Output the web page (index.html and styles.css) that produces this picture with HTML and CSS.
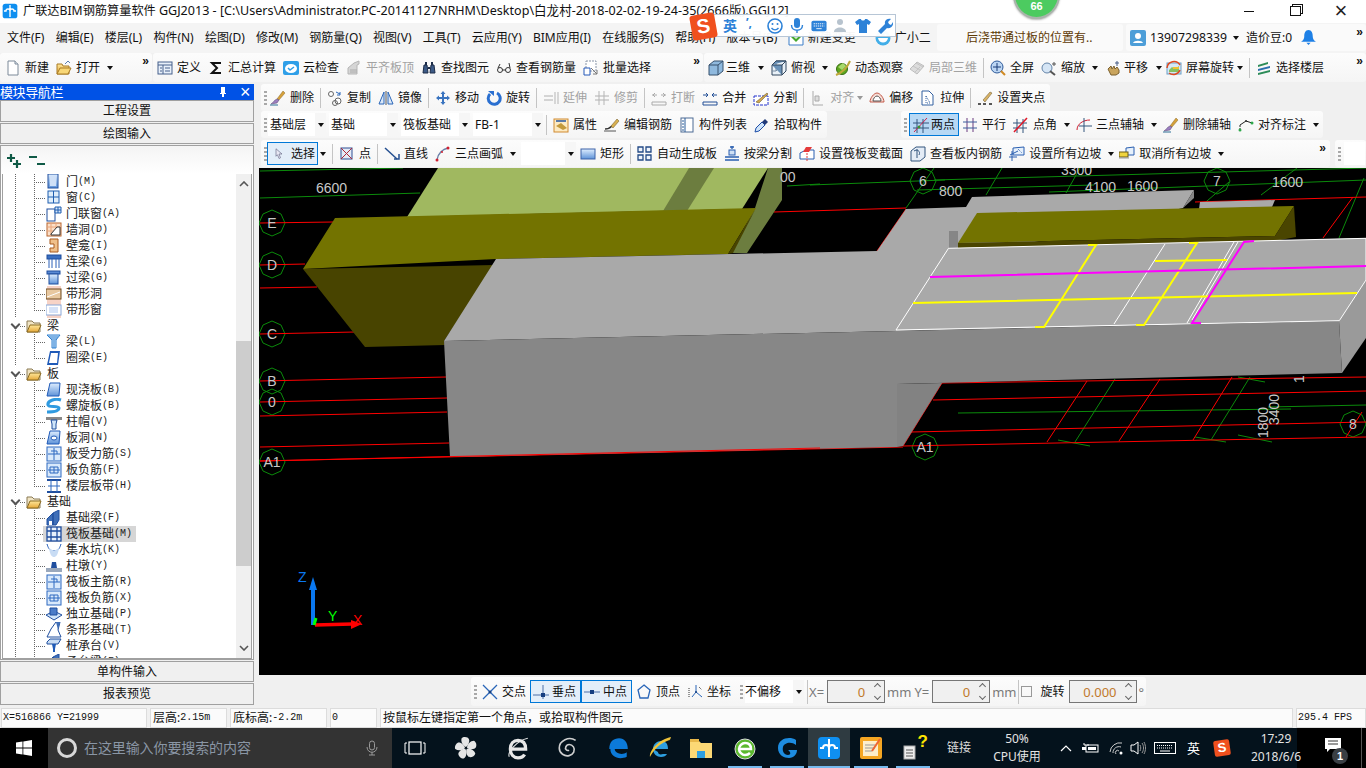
FILE: index.html
```html
<!DOCTYPE html>
<html lang="zh-CN">
<head>
<meta charset="utf-8">
<title>广联达BIM钢筋算量软件 GGJ2013</title>
<link rel="stylesheet" href="styles.css">
</head>
<body>
<svg class="sprite" aria-hidden="true"><defs>
<linearGradient id="gb" x1="0" y1="0" x2="0" y2="1"><stop offset="0" stop-color="#dfeeff"/><stop offset="1" stop-color="#5d92d8"/></linearGradient>
<linearGradient id="gy" x1="0" y1="0" x2="0" y2="1"><stop offset="0" stop-color="#ffe79a"/><stop offset="1" stop-color="#e6a93a"/></linearGradient>
<symbol id="new" viewBox="0 0 16 16"><path d="M3 1h7l3 3v11H3z" fill="#fff" stroke="#7d8a99"/><path d="M10 1v3h3" fill="#dfe6ee" stroke="#7d8a99"/></symbol>
<symbol id="open" viewBox="0 0 16 16"><path d="M1 14V4h5l1 2h6v8z" fill="url(#gy)" stroke="#a87a25"/><path d="M1 14l3-6h11l-3 6z" fill="#f8d777" stroke="#a87a25"/><path d="M9 4l3-3 2 2" fill="none" stroke="#5a7fb0"/></symbol>
<symbol id="chg" viewBox="0 0 16 16"><path d="M1 4v11h14V4" fill="#fff" stroke="#3d7fc8"/><path d="M8 3l5 4-5 5-5-5z" fill="#46a82e"/><path d="M8 5v4M6 7h4" stroke="#fff"/></symbol>
<symbol id="xiao" viewBox="0 0 16 16"><circle cx="8" cy="8" r="7.500" fill="#42aee8"/><path d="M3 8c1 6 9 6 10 0" fill="#fff"/><circle cx="5.500" cy="5" r="1" fill="#fff"/><circle cx="10.500" cy="5" r="1" fill="#fff"/></symbol>
<symbol id="def" viewBox="0 0 16 16"><rect x="1" y="2" width="14" height="12" fill="#e8f0fa" stroke="#46608c"/><path d="M1 5h14M6 5v9M3 8h2M3 11h2M8 8h5M8 11h5" stroke="#46608c"/></symbol>
<symbol id="sigma" viewBox="0 0 16 16"><path d="M13 3H4l5 5-5 5h9" fill="none" stroke="#111" stroke-width="2"/></symbol>
<symbol id="cloud" viewBox="0 0 16 16"><rect x="0" y="1" width="16" height="14" rx="2" fill="#2f9fe8"/><ellipse cx="8" cy="8.500" rx="6" ry="4.500" fill="#fff"/><path d="M5 8l2 2 4-3" fill="none" stroke="#2f9fe8" stroke-width="1.500"/></symbol>
<symbol id="flat" viewBox="0 0 16 16"><path d="M2 14V8l6-5 5-2v3l-2 1v9z" fill="#d5d5d5" stroke="#b5b5b5"/><path d="M4 10h7M4 12h7" stroke="#aaa"/></symbol>
<symbol id="binoc" viewBox="0 0 16 16"><path d="M2 13l1-8h3l1 8zM9 13l1-8h3l1 8z" fill="#3c5a86" stroke="#1c2c48"/><rect x="4" y="2" width="2" height="3" fill="#1c2c48"/><rect x="10" y="2" width="2" height="3" fill="#1c2c48"/><rect x="7" y="7" width="2" height="2" fill="#1c2c48"/></symbol>
<symbol id="glasses" viewBox="0 0 16 16"><circle cx="4" cy="10" r="2.500" fill="none" stroke="#333"/><circle cx="12" cy="10" r="2.500" fill="none" stroke="#333"/><path d="M6.500 10h3M2 8l2-4M14 8l-1-5" stroke="#333" fill="none"/></symbol>
<symbol id="batch" viewBox="0 0 16 16"><path d="M3 1h10v10H3z" fill="#fff" stroke="#8895a8" stroke-dasharray="2 1"/><path d="M1 8h6v7H1z" fill="#fff" stroke="#2559b8"/><path d="M8 8l6 6M10 14h4v-4" stroke="#777" fill="none"/></symbol>
<symbol id="cube" viewBox="0 0 16 16"><path d="M1 5l5-4h9v10l-5 4H1z" fill="#8fb9de" stroke="#37506c"/><path d="M1 5h9v10M10 5l5-4" fill="none" stroke="#37506c"/></symbol>
<symbol id="cube2" viewBox="0 0 16 16"><path d="M1 5l4-4h10v10l-4 4H1z" fill="#e9f1f8" stroke="#31475e"/><path d="M5 1v10H1M5 11l6-6" fill="none" stroke="#7a8ea3"/><path d="M1 5h10v10M11 5l4-4M1 5l4-4h10" fill="#6a92b8" stroke="#31475e"/></symbol>
<symbol id="orbit" viewBox="0 0 16 16"><circle cx="7" cy="9" r="5.500" fill="#5da81e" stroke="#396e12"/><path d="M1 15C6 13 12 8 15 1" fill="none" stroke="#bfa93b" stroke-width="2"/><path d="M3 7l5-4 3 3-4 4z" fill="#a8d96c"/></symbol>
<symbol id="cubegray" viewBox="0 0 16 16"><path d="M1 9l7-7 7 4-7 8z" fill="#dcdcdc" stroke="#bdbdbd"/><path d="M4 6l7 4M7 3l7 4M6 12l5-5" stroke="#c4c4c4"/></symbol>
<symbol id="full" viewBox="0 0 16 16"><circle cx="7" cy="7" r="6" fill="#bcd6f3" stroke="#2e5a9a"/><path d="M7 3v8M3 7h8" stroke="#1a3c78"/><path d="M11 11l4 4" stroke="#d08a23" stroke-width="2"/></symbol>
<symbol id="zoomi" viewBox="0 0 16 16"><circle cx="6" cy="8" r="5" fill="#d5e5f5" stroke="#6484a8"/><path d="M9 11l5 4" stroke="#555" stroke-width="2"/><path d="M13 2v4M11 4h4" stroke="#555"/></symbol>
<symbol id="hand" viewBox="0 0 16 16"><path d="M2 9l3-3 1 3 2-3 1 3 2-2 2 3v3l-3 2H5z" fill="#c9a45d" stroke="#7b6130"/><path d="M11 1v5M9 3h4" stroke="#465d86"/></symbol>
<symbol id="srot" viewBox="0 0 16 16"><rect x="1" y="3" width="14" height="11" fill="#d6e8f5" stroke="#6aa0c8"/><path d="M3 10l3-3 3 2 4-3v6H3z" fill="#86c060"/><rect x="7" y="7" width="6" height="2" fill="#f0c030"/><path d="M1 8a7 7 0 0 1 13-3" fill="none" stroke="#e04a20" stroke-width="1.500"/><path d="M14 10a7 7 0 0 1-11 3" fill="none" stroke="#e04a20" stroke-width="1.500"/></symbol>
<symbol id="layers" viewBox="0 0 16 16"><path d="M2 5l10-3v2L2 7z" fill="#2c8c58"/><path d="M2 9l12-3v2L2 11z" fill="#2c6fae"/><path d="M2 13l12-3v2L2 15z" fill="#2c8c58"/></symbol>
<symbol id="user" viewBox="0 0 16 16"><rect width="16" height="16" rx="2" fill="#4d9ed8"/><circle cx="8" cy="6" r="3" fill="#fff"/><path d="M3 13c1-3 9-3 10 0z" fill="#fff"/></symbol>
<symbol id="bell" viewBox="0 0 16 16"><path d="M8 1c-3 0-4 3-4 6 0 2-1 4-3 5h14c-2-1-3-3-3-5 0-3-1-6-4-6z" fill="#1e80e6"/><path d="M6 13h4l-2 2z" fill="#1e80e6"/></symbol>
<symbol id="brush" viewBox="0 0 16 16"><path d="M7 9l6-8 2 2-6 7z" fill="#d6a13a" stroke="#8a6b2b" stroke-width=".5"/><path d="M7 9l2 1-2 3-6 1c2-1 3-4 6-5z" fill="#9c7fc0" stroke="#52406e" stroke-width=".5"/><path d="M0 15h8" stroke="#2d6e96"/></symbol>
<symbol id="copy" viewBox="0 0 16 16"><circle cx="4" cy="4" r="2.500" fill="#fff" stroke="#666"/><circle cx="11" cy="11" r="3" fill="#fff" stroke="#666"/><circle cx="8" cy="13" r="2.500" fill="none" stroke="#666"/><path d="M9 2l4 2M13 2v3h-3" fill="none" stroke="#2a66b8"/></symbol>
<symbol id="mirror" viewBox="0 0 16 16"><path d="M1 14L6 2v12zM15 14L10 2v12z" fill="#dbe8f8" stroke="#2a66b8"/><path d="M8 1v14" stroke="#555"/></symbol>
<symbol id="move" viewBox="0 0 16 16"><path d="M8 1l2.500 3H9v3h3V5.500L15 8l-3 2.500V9H9v3h1.500L8 15l-2.500-3H7V9H4v1.500L1 8l3-2.500V7h3V4H5.500z" fill="#3a74c0"/></symbol>
<symbol id="rotate" viewBox="0 0 16 16"><path d="M4 4a6 6 0 1 0 7-1" fill="none" stroke="#2a6fd0" stroke-width="3"/><path d="M2 1h6v5z" fill="#2a6fd0"/></symbol>
<symbol id="ext" viewBox="0 0 16 16"><path d="M1 6h9M1 10h9" stroke="#b0b0b0"/><path d="M12 2v12M15 2v12" stroke="#b5b5b5"/></symbol>
<symbol id="trim" viewBox="0 0 16 16"><path d="M1 6h14M1 10h14" stroke="#b0b0b0"/><path d="M5 1v14M10 1v14" stroke="#b5b5b5"/></symbol>
<symbol id="brk" viewBox="0 0 16 16"><path d="M1 12h14v3H1z" fill="none" stroke="#aaa"/><path d="M1 5h5M10 5h5M4 3l-2 2 2 2M12 3l2 2-2 2" fill="none" stroke="#aaa"/></symbol>
<symbol id="merge" viewBox="0 0 16 16"><path d="M1 12h14v3H1z" fill="none" stroke="#224f96"/><path d="M1 5h5M10 5h5M4 3l2 2-2 2M12 3l-2 2 2 2" fill="none" stroke="#224f96"/></symbol>
<symbol id="split" viewBox="0 0 16 16"><rect x="1" y="6" width="14" height="9" fill="#fff" stroke="#2233cc" stroke-dasharray="3 1"/><path d="M3 12L14 3l1 1-9 9z" fill="#d0a84e" stroke="#5e4a20" stroke-width=".5"/></symbol>
<symbol id="align" viewBox="0 0 16 16"><path d="M3 1v14M3 15h10" stroke="#aaa"/><path d="M5 6h4v5H5z" fill="#ddd" stroke="#aaa"/></symbol>
<symbol id="offset" viewBox="0 0 16 16"><path d="M1 12c0-4 4-9 7-9s7 5 7 9z" fill="#f8dcd5" stroke="#c25b4a"/><path d="M4 11c0-2 2-5 4-5s4 3 4 5z" fill="#fff" stroke="#555"/></symbol>
<symbol id="stretch" viewBox="0 0 16 16"><path d="M2 1h7l4 4v10H2z" fill="#fff" stroke="#3360a0"/><path d="M6 6l4 7H6z" fill="none" stroke="#3360a0" stroke-dasharray="1 1"/></symbol>
<symbol id="grip2" viewBox="0 0 16 16"><path d="M1 14h3M6 14h3M12 14h3" stroke="#222" stroke-width="1.500"/><path d="M6 10L13 2l2 1-7 9z" fill="#d8b366" stroke="#66532a" stroke-width=".5"/></symbol>
<symbol id="prop" viewBox="0 0 16 16"><rect x="1" y="2" width="14" height="13" fill="#fdeac2" stroke="#d08a30"/><path d="M3 9l5-3 6 5-4 2z" fill="#c49a3c"/><path d="M3 4h10" stroke="#5b7aa8" stroke-width="2"/></symbol>
<symbol id="rebar" viewBox="0 0 16 16"><path d="M1 12c3 0 5-1 7-3" fill="none" stroke="#333" stroke-width="1.500"/><path d="M7 9l6-7 2 2-6 7z" fill="#d8b050" stroke="#665020" stroke-width=".5"/><path d="M0 14h12" stroke="#555"/></symbol>
<symbol id="list" viewBox="0 0 16 16"><rect x="2" y="1" width="12" height="14" fill="#fff" stroke="#4d6b94"/><path d="M6 1v14M3 4h2M3 7h2M3 10h2M3 13h2" stroke="#2b5c99"/></symbol>
<symbol id="drop" viewBox="0 0 16 16"><path d="M1 15l1-4 6-6 3 3-6 6z" fill="#cfe4fa" stroke="#1e4ea8"/><path d="M8 5l3-3 3 3-3 3z" fill="#223a78"/></symbol>
<symbol id="twopt" viewBox="0 0 16 16"><path d="M4 2v14M10 2v14M0 6h16M0 11h16" stroke="#33557d"/><path d="M1 15L14 1" stroke="#d0234a"/><circle cx="6" cy="10" r="1.500" fill="#3c9632"/></symbol>
<symbol id="para" viewBox="0 0 16 16"><path d="M5 1v14M11 1v14" stroke="#6b3d80"/><path d="M1 5h14M1 11h14" stroke="#3b5c9c"/></symbol>
<symbol id="ang" viewBox="0 0 16 16"><path d="M4 2v14M10 2v14M0 6h14M0 11h14" stroke="#33557d"/><path d="M1 15L14 1" stroke="#e01828" stroke-width="1.500"/></symbol>
<symbol id="arcax" viewBox="0 0 16 16"><path d="M1 13C1 7 7 3 14 3" fill="none" stroke="#d01e30"/><path d="M8 1v14M3 9h13" stroke="#33557d"/></symbol>
<symbol id="dim" viewBox="0 0 16 16"><path d="M2 8l6-4 6 2" fill="none" stroke="#222"/><path d="M2 8v6" stroke="#222" stroke-dasharray="2 1"/><circle cx="2" cy="13" r="1.500" fill="#2ea84a"/><circle cx="14" cy="6" r="1.500" fill="#2ea84a"/><circle cx="8" cy="4" r="1" fill="#333"/></symbol>
<symbol id="cursor" viewBox="0 0 16 16"><path d="M4 1l8 7H8l2 5-2 1-2-5-2 2z" fill="#e8e8f4" stroke="#5a5a7a" stroke-width=".8"/></symbol>
<symbol id="pt" viewBox="0 0 16 16"><rect x="2" y="2" width="11" height="11" fill="#e4ebf7" stroke="#2d4f94"/><path d="M2 2l11 11M13 2L2 13" stroke="#b02838"/></symbol>
<symbol id="line" viewBox="0 0 16 16"><path d="M1 2l12 11" stroke="#244f90" stroke-width="1.500"/><path d="M10 13h5V8" fill="none" stroke="#244f90" stroke-width="1.500"/></symbol>
<symbol id="arc" viewBox="0 0 16 16"><path d="M2 14C3 7 8 3 13 2" fill="none" stroke="#6b7fa8" stroke-width="1.500"/><circle cx="2" cy="14" r="1.500" fill="#d02030"/><circle cx="13" cy="2" r="1.500" fill="#d02030"/><circle cx="7" cy="6" r="1" fill="#d02030"/></symbol>
<symbol id="rect" viewBox="0 0 16 16"><rect x="1" y="3" width="14" height="10" fill="url(#gb)" stroke="#3d63a8"/></symbol>
<symbol id="auto" viewBox="0 0 16 16"><path d="M1 1h5v5H1zM9 1h5v5H9zM1 9h5v5H1zM9 9h5v5H9z" fill="#eef4fc" stroke="#234a86" stroke-width="1.300"/></symbol>
<symbol id="bsplit" viewBox="0 0 16 16"><rect x="5" y="4" width="6" height="5" fill="#cfe0f5" stroke="#2a5fb0"/><path d="M8 0v3M6 1h4M1 11h14M1 14h14" stroke="#2a5fb0" stroke-width="1.300"/></symbol>
<symbol id="slabv" viewBox="0 0 16 16"><path d="M1 7l6-3h8v9H1z" fill="#fff" stroke="#2a5fb0"/><path d="M7 1h6l-3 5H4z" fill="#e43a3a"/><path d="M8 4v12" stroke="#e43a3a" stroke-dasharray="2 1"/></symbol>
<symbol id="vrebar" viewBox="0 0 16 16"><path d="M1 5l5-4h9v10l-5 4H1z" fill="#e4ecf6" stroke="#33557d"/><path d="M4 5c3-2 7 0 5 4M7 3v9" fill="none" stroke="#33557d"/></symbol>
<symbol id="slope" viewBox="0 0 16 16"><path d="M4 2l11-1v8H4z" fill="#e6f0fb" stroke="#2a5fb0"/><path d="M1 9l8-4M3 5v10M0 11h8" stroke="#2a5fb0"/><path d="M9 3l4 4" stroke="#2a5fb0" stroke-dasharray="1 1"/></symbol>
<symbol id="unslope" viewBox="0 0 16 16"><path d="M7 2l8-1v8H7z" fill="#e6f0fb" stroke="#2a5fb0"/><rect x="0" y="6" width="9" height="5" fill="#f0d43e" stroke="#6a5a18"/><path d="M0 12h10" stroke="#999"/></symbol>
<symbol id="cross" viewBox="0 0 16 16"><path d="M1 1l14 14M15 1L1 15" stroke="#2a66b8" stroke-width="1.300"/><circle cx="8" cy="8" r="1.500" fill="#163f80"/></symbol>
<symbol id="perp" viewBox="0 0 16 16"><path d="M10 1v14M0 11h16" stroke="#4a6ea8"/><rect x="8" y="9" width="4" height="4" fill="#163f80"/></symbol>
<symbol id="mid" viewBox="0 0 16 16"><path d="M0 8h16" stroke="#4a6ea8"/><rect x="6" y="6" width="4" height="4" fill="#163f80"/></symbol>
<symbol id="pent" viewBox="0 0 16 16"><path d="M8 1l6 5-2 8H4L2 6z" fill="none" stroke="#2a66b8" stroke-width="1.300"/></symbol>
<symbol id="coord" viewBox="0 0 16 16"><path d="M5 13l4-5 6 5M9 8V1" fill="none" stroke="#2a66b8"/><path d="M2 4v9M12 3l3 3" stroke="#333" stroke-dasharray="1 1"/><circle cx="9" cy="8" r="1" fill="#163f80"/></symbol>
<symbol id="t-door" viewBox="0 0 16 16"><rect x="2" y="0" width="10" height="14" fill="url(#gb)" stroke="#1f4e9e"/><rect x="4" y="2" width="6" height="10" fill="#cfe0f7"/></symbol>
<symbol id="t-win" viewBox="0 0 16 16"><rect x="2" y="1" width="11" height="12" fill="#dfeefb" stroke="#1f5eb0"/><path d="M7.500 1v12M2 7h11" stroke="#1f5eb0"/></symbol>
<symbol id="t-dwin" viewBox="0 0 16 16"><rect x="1" y="3" width="8" height="12" fill="#fff" stroke="#1f4e9e"/><path d="M9 1h6v6H9zM12 1v6M9 4h6" fill="#d5e5fa" stroke="#1f5eb0"/></symbol>
<symbol id="t-wallh" viewBox="0 0 16 16"><rect x="1" y="1" width="14" height="13" fill="#fbdfc8" stroke="#b8642c"/><path d="M1 5h14M1 9h14M5 1v13M10 1v13" stroke="#e8a47a"/><path d="M5 12l6-7h3v8H5z" fill="#fff" stroke="#333"/></symbol>
<symbol id="t-niche" viewBox="0 0 16 16"><path d="M4 1h8v13H4v-4h4V6H4z" fill="#f0c08a" stroke="#a85a1e"/></symbol>
<symbol id="t-lbeam" viewBox="0 0 16 16"><rect x="1" y="1" width="14" height="4" fill="#3a6fc0" stroke="#1f4e9e"/><path d="M3 5v9M6 5v9M10 5v9M13 5v9" stroke="#2c60b8"/></symbol>
<symbol id="t-over" viewBox="0 0 16 16"><rect x="1" y="1" width="13" height="3" fill="#5a8ad4" stroke="#1f4e9e"/><rect x="3" y="4" width="9" height="10" fill="url(#gb)" stroke="#1f4e9e"/></symbol>
<symbol id="t-band" viewBox="0 0 16 16"><rect x="1" y="0" width="14" height="3" fill="#f7d3c6"/><rect x="1" y="13" width="14" height="3" fill="#f7d3c6"/><rect x="0" y="3" width="15" height="10" fill="#e8c8a0" stroke="#6e4a20"/><path d="M1 11l13-5" stroke="#fff"/></symbol>
<symbol id="t-bandw" viewBox="0 0 16 16"><rect x="1" y="0" width="14" height="3" fill="#f7d3c6"/><rect x="1" y="13" width="14" height="3" fill="#f7d3c6"/><rect x="0" y="3" width="15" height="10" fill="#fff" stroke="#8aa8d8"/><rect x="3" y="5" width="9" height="6" fill="#d5e2f8"/></symbol>
<symbol id="folder" viewBox="0 0 16 16"><path d="M1 14V3h5l2 2h6v9z" fill="#f0e4c4" stroke="#8a7a55"/><path d="M1 14l3-7h11l-3 7z" fill="url(#gy)" stroke="#8a6a20"/></symbol>
<symbol id="t-beam" viewBox="0 0 16 16"><path d="M1 1l13 0-4 5v8H6V6z" fill="#cfe5fa" stroke="#2f80d0"/><path d="M3 3h9M5 5h6M8 6v8" stroke="#2f80d0"/></symbol>
<symbol id="t-ring" viewBox="0 0 16 16"><path d="M4 1h10l-2 14H1z" fill="#1f5ab8"/><path d="M5 3h7l-1 10H3z" fill="#fff"/></symbol>
<symbol id="t-slab" viewBox="0 0 16 16"><path d="M4 1h10l-1 13H1z" fill="url(#gb)" stroke="#1f5ab8"/></symbol>
<symbol id="t-spir" viewBox="0 0 16 16"><path d="M15 2C9 0 1 3 2 7c1 3 10 0 11 3 0 3-6 4-12 4" fill="none" stroke="#2f9ae0" stroke-width="3"/></symbol>
<symbol id="t-cap" viewBox="0 0 16 16"><rect x="0" y="3" width="16" height="3" fill="#888"/><path d="M5 6h6l-1 4v5H6v-5z" fill="#cfe5fa" stroke="#1f4e9e"/></symbol>
<symbol id="t-hole" viewBox="0 0 16 16"><path d="M4 1h10l-1 13H1z" fill="url(#gb)" stroke="#1f5ab8"/><ellipse cx="8" cy="8" rx="3" ry="2" fill="#fff" stroke="#1f5ab8"/></symbol>
<symbol id="t-rb1" viewBox="0 0 16 16"><rect x="1" y="1" width="14" height="14" fill="#d9e9fb" stroke="#2c68c0"/><path d="M2 8h12M8 2v12" stroke="#2c68c0"/><path d="M5 5h6v3" fill="none" stroke="#2c68c0"/></symbol>
<symbol id="t-rb2" viewBox="0 0 16 16"><rect x="1" y="1" width="14" height="14" fill="#d9e9fb" stroke="#2c68c0"/><path d="M4 5h8v6H4zM2 8h12M8 5v6" fill="none" stroke="#2c68c0"/></symbol>
<symbol id="t-strip" viewBox="0 0 16 16"><path d="M1 2h14M1 14h14" stroke="#1f4e9e" stroke-width="2"/><path d="M5 2v12M11 2v12M2 8h12" stroke="#2c68c0"/></symbol>
<symbol id="t-fbeam" viewBox="0 0 16 16"><path d="M1 15V9l6-6v12zM7 3l6-3v10l-3 5H7z" fill="#3f6fb8" stroke="#1f4e9e"/><path d="M3 15v-4h3v4z" fill="#fff"/></symbol>
<symbol id="t-raft" viewBox="0 0 16 16"><rect x="1" y="1" width="14" height="14" fill="#e8f1fb" stroke="#1f4e9e" stroke-width="1.300"/><path d="M1 5h14M1 11h14M5 1v14M11 1v14" stroke="#1f4e9e" stroke-width="1.300"/></symbol>
<symbol id="t-pit" viewBox="0 0 16 16"><path d="M1 2c1 3 2 7 7 7s6-4 7-7" fill="none" stroke="#1f5ab8"/><path d="M3 6c1 7 3 9 5 9s4-2 5-9l-5 3z" fill="#c8dcf4"/></symbol>
<symbol id="t-pier" viewBox="0 0 16 16"><rect x="0" y="10" width="16" height="4" fill="#9aa8bc"/><path d="M5 10l1-6h4l1 6z" fill="#1f4e9e"/></symbol>
<symbol id="t-iso" viewBox="0 0 16 16"><path d="M0 9l8-4 8 4-8 5z" fill="#cfe5fa" stroke="#1f4e9e"/><path d="M4 2h7v7H4z" fill="#4a7cc8" stroke="#1f4e9e"/></symbol>
<symbol id="t-bar" viewBox="0 0 16 16"><path d="M1 15l4-8 5-7 4 0-2 8 3 7z" fill="#fff" stroke="#1f4e9e"/><path d="M10 0l4 0-2 8z" fill="#3f6fb8"/></symbol>
<symbol id="t-cp" viewBox="0 0 16 16"><path d="M1 4l3-3h11l-3 5H1z" fill="#c8dcf4" stroke="#1f4e9e"/><path d="M6 6h4l-1 5v3H7v-3z" fill="#1f5ab8"/></symbol>
<symbol id="win" viewBox="0 0 16 16"><path d="M0 2.500L6.500 1.600V7.500H0zM7.300 1.500L16 0V7.500H7.300zM0 8.500H6.500V14.400L0 13.500zM7.300 8.500H16V16L7.300 14.500z" fill="#fff"/></symbol>
<symbol id="mic" viewBox="0 0 16 16"><rect x="5.500" y="1" width="5" height="9" rx="2.500" fill="none" stroke="#9a9a9a"/><path d="M3 7c0 7 10 7 10 0M8 12v3M5 15h6" fill="none" stroke="#9a9a9a"/></symbol>
<symbol id="tview" viewBox="0 0 22 16"><rect x="5" y="2" width="12" height="12" fill="none" stroke="#fff" stroke-width="1.200"/><path d="M3 3H1v10h2M19 3h2v10h-2" fill="none" stroke="#fff"/></symbol>
<symbol id="fan" viewBox="0 0 22 22"><g fill="#e6e6e6"><path id="bl" d="M11 10C8 9 6 5 7 2c2-2 7-1 7 2 0 2-1 5-3 6z"/><use href="#bl" transform="rotate(72 11 11)"/><use href="#bl" transform="rotate(144 11 11)"/><use href="#bl" transform="rotate(216 11 11)"/><use href="#bl" transform="rotate(288 11 11)"/></g></symbol>
<symbol id="iee" viewBox="0 0 22 22"><path d="M4 12h14c0-6-3-8-7-8s-7 3-7 8 3 8 7 8c3 0 5-1 6-3" fill="none" stroke="#e8e8e8" stroke-width="3"/><path d="M3 19C1 15 10 4 20 2" fill="none" stroke="#e8e8e8"/></symbol>
<symbol id="swirl" viewBox="0 0 22 22"><path d="M18 4C12 0 3 4 3 11c0 5 5 8 9 7 4-1 6-5 4-8s-6-3-7 0c-1 2 1 4 3 3" fill="none" stroke="#cfcfcf" stroke-width="1.500"/></symbol>
<symbol id="edge" viewBox="0 0 22 22"><path d="M3 12C3 5 7 2 12 2c5 0 8 4 8 10H8c0 4 7 6 11 3v4c-6 3-15 1-15-7z" fill="#0c7ad9"/></symbol>
<symbol id="ie" viewBox="0 0 24 24"><path d="M5 13h15c0-6-3-8-7-8s-8 3-8 8 4 8 8 8c3 0 5-1 6-3h-4c-3 1-5 0-5-2z" fill="#2e9fe0"/><path d="M2 21C1 14 12 3 23 1 22 5 21 4 19 5 10 8 4 17 2 21z" fill="#f0c43a"/></symbol>
<symbol id="expl" viewBox="0 0 24 24"><path d="M1 5h9l2 2h11v15H1z" fill="#fcd875"/><rect x="1" y="3" width="9" height="3" fill="#e9b84a"/><rect x="8" y="15" width="8" height="7" fill="#2f9fe0"/></symbol>
<symbol id="gre" viewBox="0 0 24 24"><circle cx="12" cy="13" r="10" fill="#5bb82e" stroke="#ddd"/><path d="M6 13h12c0-5-3-6-6-6s-6 3-6 6 3 6 6 6c2 0 4-1 5-2" fill="none" stroke="#fff" stroke-width="2.500"/></symbol>
<symbol id="gblue" viewBox="0 0 24 24"><path d="M21 4C15 0 3 2 3 12c0 7 6 10 11 10s8-4 8-8h-9c3 2 3 5 0 5-4 0-6-4-5-8s8-6 13-2z" fill="#1d8ce0"/></symbol>
<symbol id="glodon" viewBox="0 0 24 24"><rect x="1" y="1" width="22" height="22" rx="4" fill="#0f8ff0"/><path d="M12 3v18M3 12h3a3 3 0 0 1 6 0 3 3 0 0 1 6 0h3" fill="none" stroke="#fff" stroke-width="2"/></symbol>
<symbol id="note" viewBox="0 0 24 24"><rect x="1" y="1" width="22" height="22" rx="2" fill="#f5a623"/><rect x="4" y="5" width="15" height="15" fill="#fdeecb"/><path d="M6 9h10M6 12h10M6 15h7" stroke="#999"/><path d="M13 15l8-12" stroke="#e63" stroke-width="2"/></symbol>
<symbol id="help" viewBox="0 0 24 24"><rect x="3" y="10" width="11" height="13" fill="#eee" stroke="#aaa"/><path d="M5 14h7M5 17h7M5 20h7" stroke="#555"/></symbol>
<symbol id="batt" viewBox="0 0 18 12"><path d="M1 2h2v2M6 2v2" stroke="#fff"/><rect x="4" y="3" width="12" height="7" fill="none" stroke="#fff"/><rect x="6" y="5" width="8" height="3" fill="#fff"/><rect x="0" y="5" width="4" height="3" fill="#fff"/></symbol>
<symbol id="wifi" viewBox="0 0 16 16"><path d="M1 12a10 10 0 0 1 12-9M4 13a6 6 0 0 1 8-6M7 14a2 2 0 0 1 3-3" fill="none" stroke="#ccc"/><circle cx="12" cy="13" r="1.500" fill="#fff"/></symbol>
<symbol id="spk" viewBox="0 0 16 16"><path d="M1 5h3l4-3v12l-4-3H1z" fill="none" stroke="#fff"/><path d="M10 5c1 2 1 4 0 6M12 3c2 3 2 7 0 10M14 2c2 4 2 8 0 12" fill="none" stroke="#999"/></symbol>
<symbol id="kbd" viewBox="0 0 22 12"><rect x=".5" y=".5" width="21" height="11" fill="none" stroke="#fff"/><path d="M3 3.500h16M3 6h16" stroke="#fff" stroke-dasharray="1 1"/><path d="M6 9h10" stroke="#fff"/></symbol>
<symbol id="chat" viewBox="0 0 16 16"><path d="M0 0h16v11H5l-3 3v-3H0z" fill="#fff"/><path d="M3 3h10M3 6h10" stroke="#333"/></symbol>
<symbol id="smile" viewBox="0 0 16 16"><circle cx="8" cy="8" r="7" fill="none" stroke="#2d82d8" stroke-width="1.600"/><circle cx="5.500" cy="6" r="1" fill="#2d82d8"/><circle cx="10.500" cy="6" r="1" fill="#2d82d8"/><path d="M4.500 10c2 2.500 5 2.500 7 0" fill="none" stroke="#2d82d8" stroke-width="1.300"/></symbol>
<symbol id="imic" viewBox="0 0 16 16"><rect x="5" y="0" width="6" height="10" rx="3" fill="#2d82d8"/><path d="M2.500 7c0 7 11 7 11 0M8 12v3" fill="none" stroke="#2d82d8" stroke-width="1.400"/></symbol>
<symbol id="ikbd" viewBox="0 0 18 14"><rect x=".5" y="1" width="17" height="12" rx="2" fill="#2d82d8"/><path d="M3 4.500h12M3 7h12" stroke="#fff" stroke-dasharray="1.500 .8"/><path d="M6 10h6" stroke="#fff"/></symbol>
<symbol id="iusr" viewBox="0 0 16 16"><circle cx="7" cy="4" r="3" fill="#b7c3ce"/><path d="M1 14c0-6 12-6 12 0z" fill="#b7c3ce"/></symbol>
<symbol id="shirt" viewBox="0 0 16 16"><path d="M4 1h2c0 2 4 2 4 0h2l4 3-2 3-2-1v9H4V6L2 7 0 4z" fill="#2d82d8"/></symbol>
<symbol id="wrench" viewBox="0 0 16 16"><path d="M1 13l7-7c-1-4 3-6 6-5l-3 3 1 2 2 1 2-3c1 4-3 7-6 6l-6 6z" fill="#2d82d8"/></symbol>
</defs></svg>

<div class="app">
  <header class="title">
    <svg class="i app-ico"><use href="#glodon"/></svg>
    <span class="title-txt"><span class="tt1">广联达BIM钢筋算量软件</span> <span class="tt2">GGJ2013 - [C:\Users\Administrator.PC-20141127NRHM\Desktop\白龙村-2018-02-02-19-24-35(2666版).GGJ12]</span></span>
    <div class="winbtns">
      <span class="wb wb-min"></span>
      <span class="wb wb-max"></span>
      <span class="wb wb-x">×</span>
    </div>
  </header>

  <nav class="menu">
    <div class="menu-l">
      <span class="mi">文件(F)</span><span class="mi">编辑(E)</span><span class="mi">楼层(L)</span><span class="mi">构件(N)</span><span class="mi">绘图(D)</span><span class="mi">修改(M)</span><span class="mi">钢筋量(Q)</span><span class="mi">视图(V)</span><span class="mi">工具(T)</span><span class="mi">云应用(Y)</span><span class="mi">BIM应用(I)</span><span class="mi">在线服务(S)</span><span class="mi">帮助(H)</span><span class="mi">版本号(B)</span>
      <span class="t m-new"><svg class="i"><use href="#chg"/></svg>新建变更</span>
      <span class="t m-xiao"><svg class="i"><use href="#xiao"/></svg>广小二</span>
    </div>
    <div class="notice">后浇带通过板的位置有..</div>
    <div class="acct">
      <svg class="i"><use href="#user"/></svg><span class="phone">13907298339</span><i class="car ca"></i><span class="beans">造价豆:0</span><svg class="i bell"><use href="#bell"/></svg><span class="more">»</span>
    </div>
  </nav>

  <div class="row1">
    <div class="band b1">
      <span class="t m5"><svg class="i"><use href="#new"/></svg>新建</span>
      <span class="t"><svg class="i"><use href="#open"/></svg>打开<i class="car"></i></span>
      <span class="more">»</span>
    </div>
    <div class="band b2">
      <span class="t m4"><svg class="i"><use href="#def"/></svg>定义</span>
      <span class="t"><svg class="i"><use href="#sigma"/></svg>汇总计算</span>
      <span class="t"><svg class="i"><use href="#cloud"/></svg>云检查</span>
      <span class="t off"><svg class="i"><use href="#flat"/></svg>平齐板顶</span>
      <span class="t"><svg class="i"><use href="#binoc"/></svg>查找图元</span>
      <span class="t"><svg class="i"><use href="#glasses"/></svg>查看钢筋量</span>
      <span class="t"><svg class="i"><use href="#batch"/></svg>批量选择</span>
      <span class="more">»</span>
    </div>
    <div class="band b3">
      <span class="t m4 tight"><svg class="i"><use href="#cube"/></svg><span class="n2">三维</span><i class="car"></i></span>
      <span class="t"><svg class="i"><use href="#cube2"/></svg>俯视<i class="car"></i></span>
      <span class="t"><svg class="i"><use href="#orbit"/></svg>动态观察</span>
      <span class="t off m6"><svg class="i"><use href="#cubegray"/></svg>局部三维</span>
      <i class="sep"></i>
      <span class="t"><svg class="i"><use href="#full"/></svg>全屏</span>
      <span class="t"><svg class="i"><use href="#zoomi"/></svg>缩放<i class="car"></i></span>
      <span class="t tight m8"><svg class="i"><use href="#hand"/></svg><span class="n2">平移</span><i class="car"></i></span>
      <span class="t m4"><svg class="i"><use href="#srot"/></svg>屏幕旋转<i class="car cn"></i></span>
      <i class="sep"></i>
      <span class="t"><svg class="i"><use href="#layers"/></svg>选择楼层</span>
      <span class="more">»</span>
    </div>
  </div>

  <div class="mid">
    <aside class="side">
      <div class="side-h"><span class="side-t">模块导航栏</span>
        <svg class="pin" viewBox="0 0 10 12"><path d="M3 1h4v6h1v1H6v3H4V8H2V7h1z" fill="#fff"/></svg>
        <span class="side-x">×</span>
      </div>
      <button class="navb">工程设置</button>
      <button class="navb nb2">绘图输入</button>
      <div class="tree-box">
        <div class="tree-tools">
          <svg class="pm" viewBox="0 0 16 15"><path d="M1 5h8M5 1v8M7 11h8M11 7v8" stroke="#0f5a46" stroke-width="2.200"/></svg>
          <svg class="pm" viewBox="0 0 16 15"><path d="M0 4h8M8 11h8" stroke="#0f5a46" stroke-width="2.200"/></svg>
        </div>
        <div class="tree-wrap">
          <div class="tree">
            <div class="r"><svg class="ti"><use href="#t-door"/></svg>门<span class="lt">(M)</span></div>
            <div class="r"><svg class="ti"><use href="#t-win"/></svg>窗<span class="lt">(C)</span></div>
            <div class="r"><svg class="ti"><use href="#t-dwin"/></svg>门联窗<span class="lt">(A)</span></div>
            <div class="r"><svg class="ti"><use href="#t-wallh"/></svg>墙洞<span class="lt">(D)</span></div>
            <div class="r"><svg class="ti"><use href="#t-niche"/></svg>壁龛<span class="lt">(I)</span></div>
            <div class="r"><svg class="ti"><use href="#t-lbeam"/></svg>连梁<span class="lt">(G)</span></div>
            <div class="r"><svg class="ti"><use href="#t-over"/></svg>过梁<span class="lt">(G)</span></div>
            <div class="r"><svg class="ti"><use href="#t-band"/></svg>带形洞</div>
            <div class="r last"><svg class="ti"><use href="#t-bandw"/></svg>带形窗</div>
            <div class="g"><i class="chev"></i><svg class="ti"><use href="#folder"/></svg>梁</div>
            <div class="r"><svg class="ti"><use href="#t-beam"/></svg>梁<span class="lt">(L)</span></div>
            <div class="r last"><svg class="ti"><use href="#t-ring"/></svg>圈梁<span class="lt">(E)</span></div>
            <div class="g"><i class="chev"></i><svg class="ti"><use href="#folder"/></svg>板</div>
            <div class="r"><svg class="ti"><use href="#t-slab"/></svg>现浇板<span class="lt">(B)</span></div>
            <div class="r"><svg class="ti"><use href="#t-spir"/></svg>螺旋板<span class="lt">(B)</span></div>
            <div class="r"><svg class="ti"><use href="#t-cap"/></svg>柱帽<span class="lt">(V)</span></div>
            <div class="r"><svg class="ti"><use href="#t-hole"/></svg>板洞<span class="lt">(N)</span></div>
            <div class="r"><svg class="ti"><use href="#t-rb1"/></svg>板受力筋<span class="lt">(S)</span></div>
            <div class="r"><svg class="ti"><use href="#t-rb2"/></svg>板负筋<span class="lt">(F)</span></div>
            <div class="r last"><svg class="ti"><use href="#t-strip"/></svg>楼层板带<span class="lt">(H)</span></div>
            <div class="g"><i class="chev"></i><svg class="ti"><use href="#folder"/></svg>基础</div>
            <div class="r"><svg class="ti"><use href="#t-fbeam"/></svg>基础梁<span class="lt">(F)</span></div>
            <div class="r"><span class="sel"><svg class="ti"><use href="#t-raft"/></svg>筏板基础<span class="lt">(M)</span></span></div>
            <div class="r"><svg class="ti"><use href="#t-pit"/></svg>集水坑<span class="lt">(K)</span></div>
            <div class="r"><svg class="ti"><use href="#t-pier"/></svg>柱墩<span class="lt">(Y)</span></div>
            <div class="r"><svg class="ti"><use href="#t-rb1"/></svg>筏板主筋<span class="lt">(R)</span></div>
            <div class="r"><svg class="ti"><use href="#t-rb2"/></svg>筏板负筋<span class="lt">(X)</span></div>
            <div class="r"><svg class="ti"><use href="#t-iso"/></svg>独立基础<span class="lt">(P)</span></div>
            <div class="r"><svg class="ti"><use href="#t-bar"/></svg>条形基础<span class="lt">(T)</span></div>
            <div class="r"><svg class="ti"><use href="#t-cp"/></svg>桩承台<span class="lt">(V)</span></div>
            <div class="r"><svg class="ti"><use href="#t-fbeam"/></svg>承台梁<span class="lt">(F)</span></div>
          </div>
          <div class="sb">
            <svg class="arr" viewBox="0 0 10 6"><path d="M1 5l4-4 4 4" fill="none" stroke="#555" stroke-width="1.600"/></svg>
            <div class="sb-track"><div class="sb-thumb"></div></div>
            <svg class="arr" viewBox="0 0 10 6"><path d="M1 1l4 4 4-4" fill="none" stroke="#555" stroke-width="1.600"/></svg>
          </div>
        </div>
      </div>
      <button class="navb nb3">单构件输入</button>
      <button class="navb nb4">报表预览</button>
    </aside>

    <main class="work">
      <div class="trow tr2">
        <div class="band bt2">
          <i class="grip"></i>
          <span class="t m3"><svg class="i"><use href="#brush"/></svg>删除</span><i class="sep"></i>
          <span class="t"><svg class="i"><use href="#copy"/></svg>复制</span>
          <span class="t"><svg class="i"><use href="#mirror"/></svg>镜像</span><i class="sep"></i>
          <span class="t"><svg class="i"><use href="#move"/></svg>移动</span>
          <span class="t"><svg class="i"><use href="#rotate"/></svg>旋转</span><i class="sep"></i>
          <span class="t off"><svg class="i"><use href="#ext"/></svg>延伸</span>
          <span class="t off"><svg class="i"><use href="#trim"/></svg>修剪</span><i class="sep"></i>
          <span class="t off"><svg class="i"><use href="#brk"/></svg>打断</span>
          <span class="t"><svg class="i"><use href="#merge"/></svg>合并</span>
          <span class="t"><svg class="i"><use href="#split"/></svg>分割</span><i class="sep"></i>
          <span class="t off"><svg class="i"><use href="#align"/></svg>对齐<i class="car cn cg"></i></span>
          <span class="t m6"><svg class="i"><use href="#offset"/></svg>偏移</span>
          <span class="t"><svg class="i"><use href="#stretch"/></svg>拉伸</span><i class="sep"></i>
          <span class="t"><svg class="i"><use href="#grip2"/></svg>设置夹点</span>
        </div>
      </div>
      <div class="trow tr3">
        <div class="band bt3">
          <i class="grip"></i>
          <span class="combo c1"><span class="cf">基础层</span><span class="cc"><i class="car c0"></i></span></span>
          <span class="combo c2"><span class="cf">基础</span><span class="cc"><i class="car c0"></i></span></span>
          <span class="combo c3"><span class="cf">筏板基础</span><span class="cc"><i class="car c0"></i></span></span>
          <span class="combo c4"><span class="cf">FB-1</span><span class="cc"><i class="car c0"></i></span></span>
          <i class="sep s3"></i>
          <span class="t"><svg class="i"><use href="#prop"/></svg>属性</span>
          <span class="t"><svg class="i"><use href="#rebar"/></svg>编辑钢筋</span>
          <span class="t"><svg class="i"><use href="#list"/></svg>构件列表</span>
          <span class="t"><svg class="i"><use href="#drop"/></svg>拾取构件</span>
        </div>
        <div class="band bt3b">
          <i class="grip"></i>
          <span class="t act b2pt"><svg class="i"><use href="#twopt"/></svg>两点</span>
          <span class="t m3"><svg class="i"><use href="#para"/></svg>平行</span>
          <span class="t"><svg class="i"><use href="#ang"/></svg>点角<i class="car"></i></span>
          <span class="t m6"><svg class="i"><use href="#arcax"/></svg>三点辅轴<i class="car"></i></span>
          <span class="t m6"><svg class="i"><use href="#brush"/></svg>删除辅轴</span>
          <span class="t"><svg class="i"><use href="#dim"/></svg>对齐标注<i class="car"></i></span>
        </div>
      </div>
      <div class="trow tr4">
        <div class="band bt4">
          <i class="grip"></i>
          <span class="t act lite bsel"><svg class="i cur"><use href="#cursor"/></svg>选择</span><i class="car cs"></i><i class="sep"></i>
          <span class="t"><svg class="i"><use href="#pt"/></svg>点</span><i class="sep"></i>
          <span class="t"><svg class="i"><use href="#line"/></svg>直线</span>
          <span class="t"><svg class="i"><use href="#arc"/></svg>三点画弧<i class="car"></i></span>
          <span class="combo c5"><span class="cf"></span><span class="cc"><i class="car c0"></i></span></span>
          <span class="t m4"><svg class="i"><use href="#rect"/></svg>矩形</span><i class="sep"></i>
          <span class="t"><svg class="i"><use href="#auto"/></svg>自动生成板</span>
          <span class="t"><svg class="i"><use href="#bsplit"/></svg>按梁分割</span>
          <span class="t"><svg class="i"><use href="#slabv"/></svg>设置筏板变截面</span>
          <span class="t"><svg class="i"><use href="#vrebar"/></svg>查看板内钢筋</span>
          <span class="t"><svg class="i"><use href="#slope"/></svg>设置所有边坡<i class="car"></i></span>
          <span class="t m5"><svg class="i"><use href="#unslope"/></svg>取消所有边坡<i class="car"></i></span>
          <span class="more">»</span>
        </div>
        <div class="band bt4b"><i class="grip"></i><span class="blank"></span></div>
      </div>

      <svg class="cad" viewBox="259 168 1107 507" xmlns="http://www.w3.org/2000/svg">
        <rect x="259" y="168" width="1107" height="507" fill="#000"/>
        <g stroke="#0b8a0b" fill="none">
          <path d="M260 171L403 168M260 198L420 193M787 186L820 184M810 185L945 180M934 180L1366 168M1049 192L1366 180M917 190L1094 185M1002 168L986 195M1080 168L1066 193M934 168L906 208M1229 182L1200 207M1297 168L1261 195M1364 178L1339 238M958 413L1291 409M1268 407L1366 405M1115 379L1075 442M1250 377L1211 440M1058 440L1090 446M1195 437L1226 442M1238 435L1272 442M1238 377L1265 382"/>
          <polygon points="272,210 281,214 285,223 281,232 272,236 263,232 259,223 263,214"/>
          <polygon points="272,252 281,256 285,265 281,274 272,278 263,274 259,265 263,256"/>
          <polygon points="272,321 281,325 285,334 281,343 272,347 263,343 259,334 263,325"/>
          <polygon points="272,368 281,372 285,381 281,390 272,394 263,390 259,381 263,372"/>
          <polygon points="272,389 281,393 285,402 281,411 272,415 263,411 259,402 263,393"/>
          <polygon points="272,449 281,453 285,462 281,471 272,475 263,471 259,462 263,453"/>
          <polygon points="923,168 932,172 936,181 932,190 923,194 914,190 910,181 914,172"/>
          <polygon points="1217,168 1226,172 1230,181 1226,190 1217,194 1208,190 1204,181 1208,172"/>
          <polygon points="925,434 934,438 938,447 934,456 925,460 916,456 912,447 916,438"/>
          <polygon points="1353,411 1362,415 1366,424 1362,433 1353,437 1344,433 1340,424 1344,415"/>
        </g>
        <g stroke="#f00" fill="none">
          <path d="M260 223L333 222M260 265L305 264M260 288L317 287M260 334L355 332M260 381L446 377M260 402L447 398M260 416L447 412M260 447L449 443M260 461L903 447M774 212L906 208M1195 202L1366 197M1353 197L1323 238M942 383L1366 377M933 400L1366 391M911 432L1366 422M903 446L1366 437M1087 381L1047 442M1160 379L1119 441M1232 377L1193 440M1362 412L1346 437M942 383L903 446M906 209L877 251"/>
        </g>
        <polygon points="438,168 768,168 742,209 407,217" fill="#a0b860"/>
        <polygon points="689,168 714,168 687,211 663,211" fill="#6c7d3f"/>
        <polygon points="768,168 782,168 782,200 747,253 731,253 755,208" fill="#6c7d3f"/>
        <polygon points="335,218 756,208 728,254 496,259 303,269" fill="#737300"/>
        <polygon points="303,269 494,265 444,341 445,345 365,347" fill="#484400"/>
        <polygon points="755,210 728,254 733,253" fill="#484400"/>
        <polygon points="1200,202 1275,200 1272,207 1199,209" fill="#a9a9a9"/>
        <polygon points="897,384 942,383 903,446 897,447" fill="#828282"/>
        <polygon points="496,259 877,251 906,209 966,207 972,197 1194,190 1183,208 1000,250 1366,238 1366,280 1339,321 444,341" fill="#a9a9a9"/>
        <polygon points="1194,190 1194,198 1183,208" fill="#868686"/>
        <polygon points="949,231 958,231 958,249 949,249" fill="#868686"/>
        <polygon points="977,213 1294,206 1275,236 958,243" fill="#737300"/>
        <polygon points="958,243 1275,236 1275,241 958,248" fill="#4a4500"/>
        <polygon points="1294,206 1296,237 1275,241 1275,236" fill="#4a4500"/>
        <polygon points="444,341 1339,321 1342,373 897,384 897,447 450,457" fill="#878787"/>
        <polygon points="1339,321 1366,280 1366,338 1342,373" fill="#9a9a9a"/>
        <path d="M260 461L820 448" stroke="#f00" fill="none"/>
        <polygon points="948.500,248.300 1366,238.300 1366,280 1339.300,320.700 896,330" fill="#a9a9a9" stroke="#fff"/>
        <g stroke="#fff" fill="none">
          <path d="M1165 244L1114 324M1234 242L1187 323M1238 242L1192 320"/>
        </g>
        <g stroke="#ff0" stroke-width="2" fill="none">
          <path d="M913 303L1357 293M1088 245H1096L1044 327H1035M1189 243H1197L1144 325H1136M1155 261L1227 260"/>
        </g>
        <g stroke="#f0f" stroke-width="2" fill="none">
          <path d="M930 277L1366 266M1254 241L1244 242L1192 323H1201"/>
        </g>
        <g class="cad-t">
          <text x="316" y="193">6600</text>
          <text x="780" y="182">00</text>
          <text x="939" y="196">800</text>
          <text x="1061" y="175">3300</text>
          <text x="1085" y="192">4100</text>
          <text x="1127" y="191">1600</text>
          <text x="1272" y="187">1600</text>
          <text transform="translate(1304 383) rotate(-90)">1</text>
          <text transform="translate(1279 425) rotate(-90)">3400</text>
          <text transform="translate(1268 438) rotate(-90)">1800</text>
          <text class="ct" x="272" y="228">E</text>
          <text class="ct" x="272" y="270">D</text>
          <text class="ct" x="272" y="339">C</text>
          <text class="ct" x="272" y="386">B</text>
          <text class="ct" x="272" y="407">0</text>
          <text class="ct" x="272" y="467">A1</text>
          <text class="ct" x="923" y="186">6</text>
          <text class="ct" x="1217" y="186">7</text>
          <text class="ct" x="925" y="452">A1</text>
          <text class="ct" x="1353" y="429">8</text>
        </g>
        <path d="M313 625V584" stroke="#0a78f0" stroke-width="4"/>
        <polygon points="313,577 317,590 309,590" fill="#0a78f0"/>
        <path d="M315 625L352 624" stroke="#f00" stroke-width="3.500"/>
        <polygon points="362,624 351,620 351,629" fill="#f00"/>
        <path d="M316 618L314 625" stroke="#0f0" stroke-width="3"/>
        <text class="ax" x="298" y="582" fill="#0a78f0">Z</text>
        <text class="ax" x="328" y="621" fill="#0f0">Y</text>
        <text class="ax" x="353" y="625" fill="#f00">X</text>
      </svg>

      <div class="brow">
        <div class="band bb">
          <i class="grip"></i>
          <span class="t m5"><svg class="i"><use href="#cross"/></svg>交点</span>
          <span class="t act lite bp m4"><svg class="i"><use href="#perp"/></svg>垂点</span>
          <span class="t act lite bp m0"><svg class="i"><use href="#mid"/></svg>中点</span>
          <span class="t m4"><svg class="i"><use href="#pent"/></svg>顶点</span>
          <span class="t"><svg class="i"><use href="#coord"/></svg>坐标</span>
          <i class="grip g9"></i>
          <span class="combo c6"><span class="cf">不偏移</span><span class="cc"><i class="car c0"></i></span></span>
          <i class="sep s2"></i>
          <span class="lab">X=</span>
          <span class="spin sp1"><span class="sv">0</span><span class="sa"><i class="up"></i><i class="dn"></i></span></span>
          <span class="lab">mm</span><span class="lab ly">Y=</span>
          <span class="spin sp1"><span class="sv">0</span><span class="sa"><i class="up"></i><i class="dn"></i></span></span>
          <span class="lab">mm</span>
          <i class="sep s2 s2b"></i>
          <span class="chk"></span>
          <span class="rot">旋转</span>
          <span class="spin sp2"><span class="sv">0.000</span><span class="sa"><i class="up"></i><i class="dn"></i></span></span>
          <span class="lab">°</span>
        </div>
      </div>
    </main>
  </div>

  <footer class="status">
    <span class="sc s-a lt">X=516866 Y=21999</span>
    <span class="sc s-b">层高:<span class="lt">2.15m</span></span>
    <span class="sc s-c">底标高:<span class="lt">-2.2m</span></span>
    <span class="sc s-d lt">0</span>
    <span class="sc s-e">按鼠标左键指定第一个角点，或拾取构件图元</span>
    <span class="sc s-f lt">295.4 FPS</span>
  </footer>

  <div class="task">
    <span class="tk-start"><svg class="win"><use href="#win"/></svg></span>
    <div class="search">
      <span class="cort"></span>
      <span class="search-t">在这里输入你要搜索的内容</span>
      <svg class="mic"><use href="#mic"/></svg>
    </div>
    <span class="tk w46"><svg class="tv"><use href="#tview"/></svg></span>
    <span class="tk w56"><svg class="ta"><use href="#fan"/></svg></span>
    <span class="tk w48"><svg class="ta"><use href="#iee"/></svg></span>
    <span class="tk w52"><svg class="ta"><use href="#swirl"/></svg></span>
    <span class="tk w48"><svg class="ta"><use href="#edge"/></svg></span>
    <span class="tk w36"><svg class="ta"><use href="#ie"/></svg></span>
    <span class="tk w46"><svg class="ta"><use href="#expl"/></svg></span>
    <span class="tk w42 on"><svg class="ta"><use href="#gre"/></svg></span>
    <span class="tk w42 on"><svg class="ta"><use href="#gblue"/></svg></span>
    <span class="tk w42 on cur-app"><svg class="ta"><use href="#glodon"/></svg></span>
    <span class="tk w42 on"><svg class="ta"><use href="#note"/></svg></span>
    <span class="tk w42 on"><svg class="ta"><use href="#help"/></svg><b class="q">?</b></span>
    <span class="tray-l">链接</span>
    <span class="cpu"><span>50%</span><span>CPU使用</span></span>
    <span class="tray">
      <svg class="up-ico" viewBox="0 0 12 8"><path d="M1 7l5-5 5 5" fill="none" stroke="#fff" stroke-width="1.200"/></svg>
      <svg class="batt"><use href="#batt"/></svg>
      <svg class="sm wf"><use href="#wifi"/></svg>
      <svg class="sm sk"><use href="#spk"/></svg>
      <svg class="kb"><use href="#kbd"/></svg>
      <span class="ime">英</span>
      <span class="sog-s">S</span>
    </span>
    <span class="clock"><span>17:29</span><span>2018/6/6</span></span>
    <span class="notif"><svg class="sm"><use href="#chat"/></svg><b class="badge">1</b></span>
  </div>
</div>

<div class="ball"><span>66</span></div>
<div class="sogou">
  <span class="sg-s">S</span>
  <span class="sg-en">英</span>
  <span class="sg-p">’,</span>
  <svg class="sg-i"><use href="#smile"/></svg>
  <svg class="sg-i"><use href="#imic"/></svg>
  <svg class="sg-i"><use href="#ikbd"/></svg>
  <svg class="sg-i"><use href="#iusr"/></svg>
  <svg class="sg-i"><use href="#shirt"/></svg>
  <svg class="sg-i"><use href="#wrench"/></svg>
</div>
</body>
</html>
```

FILE: styles.css
```css
*{box-sizing:border-box}
html,body{margin:0;padding:0;width:1366px;height:768px;overflow:hidden}
body{font:12px/16px "Noto Sans","Noto Sans CJK SC",sans-serif;color:#111;background:#f0f0f0}
.sprite{position:absolute;width:0;height:0}
.app{display:flex;flex-direction:column;height:768px}
.i{width:16px;height:16px;flex:none}
.ti{width:16px;height:16px;flex:none;margin-right:4px}

.title{height:23px;background:#fff;display:flex;align-items:center;padding-left:2px;overflow:hidden}
.app-ico{margin-right:5px}
.title-txt{white-space:nowrap;flex:none;width:1180px;overflow:hidden}
.tt1{font-size:12.200px}
.tt2{font-size:12.550px}
.winbtns{margin-left:auto;display:flex;flex:none;padding-right:2px}
.wb{width:46px;height:23px;display:flex;align-items:center;justify-content:center}
.wb-min::before{content:"";width:10px;height:1px;background:#111}
.wb-max::before{content:"";width:9px;height:8px;border:1px solid #111;box-shadow:2px -2px 0 -1px #fff,2px -2px 0 0 #111}
.wb-x{font:300 22px/1 "Liberation Sans",sans-serif;color:#222}

.menu{height:31px;background:#f4f4f4;display:flex;align-items:center;white-space:nowrap}
.menu-l{display:flex;align-items:center;flex:none;width:937px;padding-left:7px}
.mi{margin-right:11.200px}
.menu-l .m-new{margin-left:-1px;margin-right:19px}
.menu-l .m-xiao{margin-left:0}
.notice{flex:none;width:186px;height:27px;background:#fafafa;border-radius:3px;color:#5f3a05;display:flex;align-items:center;padding-left:29px}
.acct{flex:1;display:flex;align-items:center;padding-left:4px;position:relative;height:27px;background:#fafafa;margin-left:3px;border-radius:3px}
.phone{margin-left:4px;font-size:12.250px;width:77px;flex:none}
.menu .ca{margin-left:6px}
.beans{margin-left:7px}
.bell{margin-left:8px;width:17px;height:17px}
.more{margin-left:auto;margin-right:3px;font:700 12px/10px "Liberation Sans",sans-serif;align-self:flex-start;padding-top:3px;flex:none}

.row1{height:31px;display:flex;gap:1px;background:#f0f0f0;flex:none;padding-bottom:2px}
.band{display:flex;align-items:center;background:linear-gradient(#fcfcfc,#f5f5f5);border-radius:3px;white-space:nowrap;height:100%}
.b1{width:152px}
.b2{width:550px}
.b3{flex:1}
.t{display:flex;align-items:center;gap:4px;margin-left:7px;flex:none}
.t.tight{gap:2px}
.off{color:#a2a2a2}
.m0{margin-left:0}.m3{margin-left:3px}.m4{margin-left:4px}.m5{margin-left:5px}.m6{margin-left:6px}.m8{margin-left:8px}
.car{width:0;height:0;border:3.500px solid transparent;border-top:4px solid #111;border-bottom:0;margin-left:3px;flex:none;display:block}
.tight .car{margin-left:6px}
.cn{margin-left:-1px;border-width:4px 3px 0}
.cg{border-top-color:#999}
.c0{margin:0}
.cs{margin-left:2px}
.n2{width:24px}
.sep{width:1px;height:20px;background:#c4c4c4;flex:none;margin-left:6px;margin-right:-1px}

.mid{display:flex;height:624px;flex:none}
.side{width:254px;flex:none;display:flex;flex-direction:column;background:#f0f0f0}
.side-h{height:16px;background:#0052e6;color:#fff;display:flex;align-items:center;font-size:13px;letter-spacing:-.400px;flex:none}
.side-t{line-height:15px}
.pin{width:10px;height:12px;margin-left:auto}
.side-x{margin:0 4px 0 12px;font:18px/14px "Liberation Sans",sans-serif}
.navb{height:22px;flex:none;border:1px solid #a0a0a0;background:#f0f0f0;font:12px/16px "Noto Sans","Noto Sans CJK SC",sans-serif;color:#111;padding:0;width:254px}
.nb2{margin-top:1px;height:21px}
.nb3{margin-top:1px;height:21px}
.nb4{margin-top:1px}
.tree-box{height:515px;flex:none;margin-top:1px;border:1px solid #a0a0a0;background:#fff;display:flex;flex-direction:column;padding-left:1px}
.tree-tools{height:28px;display:flex;align-items:center;gap:7px;padding-left:5px;flex:none;background:linear-gradient(#f4f4f4,#fff);margin-left:-1px}
.pm{width:16px;height:15px}
.tree-wrap{flex:1;display:flex;overflow:hidden;min-height:0;border-left:1px solid #a0a0a0;border-right:1px solid #a0a0a0;border-bottom:1px solid #a0a0a0;margin-right:1px}
.tree{flex:1;overflow:hidden;min-width:0}
.r,.g{height:16px;display:flex;align-items:center;white-space:nowrap;color:#222}
.r{padding-left:43px;background:
  repeating-linear-gradient(to bottom,#666 0 1px,transparent 1px 2px) 12px 0/1px 100% no-repeat,
  repeating-linear-gradient(to bottom,#666 0 1px,transparent 1px 2px) 31px 0/1px 100% no-repeat,
  repeating-linear-gradient(to right,#666 0 1px,transparent 1px 2px) 31px 8px/11px 1px no-repeat}
.r.last{background:
  repeating-linear-gradient(to bottom,#666 0 1px,transparent 1px 2px) 12px 0/1px 100% no-repeat,
  repeating-linear-gradient(to bottom,#666 0 1px,transparent 1px 2px) 31px 0/1px 9px no-repeat,
  repeating-linear-gradient(to right,#666 0 1px,transparent 1px 2px) 31px 8px/11px 1px no-repeat}
.g{padding-left:20px;background:
  repeating-linear-gradient(to bottom,#666 0 1px,transparent 1px 2px) 12px 12px/1px 4px no-repeat,
  repeating-linear-gradient(to right,#666 0 1px,transparent 1px 2px) 17px 8px/6px 1px no-repeat}
.g .ti{margin-right:5px}
.chev{width:7px;height:7px;border:solid #555;border-width:0 2px 2px 0;transform:rotate(45deg);margin:-4px 7px 0 -11px;flex:none}
.lt{font-family:"Liberation Mono","DejaVu Sans Mono",monospace;font-size:10px}
.sel{display:flex;align-items:center;background:#d6d6d6;height:16px;margin-left:-3px;padding-left:3px;width:93px}
.sb{width:15px;flex:none;background:#f0f0f0;display:flex;flex-direction:column;align-items:center}
.arr{width:10px;height:6px;margin:7px 0;flex:none}
.sb-track{flex:1;width:15px;display:flex;flex-direction:column}
.sb-thumb{width:15px;height:225px;background:#cdcdcd;margin-top:147px}

.work{flex:1;display:flex;flex-direction:column;min-width:0;background:#f0f0f0}
.trow{display:flex;padding-left:7px;flex:none}
.tr2{height:27px}
.tr3{height:29px;padding-bottom:2px}
.tr4{height:28px;padding-bottom:1px}
.bt2{width:789px}
.bt3{width:566px}
.bt3b{width:422px;margin-left:74px}
.bt4{width:1069px}
.bt4b{margin-left:5px;flex:1}
.grip{width:3px;height:14px;margin-left:3px;flex:none;background:repeating-linear-gradient(to bottom,#a8a8a8 0 2px,transparent 2px 4px)}
.combo{display:flex;height:23px;margin-left:3px;flex:none;background:#fff}
.bt3 .grip + .combo{margin-left:1px}
.cf{flex:1;padding-left:2px;display:flex;align-items:center}
.cc{width:11px;background:#f6f6f6;display:flex;align-items:center;justify-content:center}
.c1{width:58px}.c2{width:69px}.c3{width:69px}.c4{width:70px}
.c5{width:55px;margin-left:5px}
.c6{width:59px;margin-left:2px;height:23px}
.c6 .cf{padding-left:0}
.sep.s3{margin-left:3px}
.act{height:23px;border:1px solid #0078d7;background:#b7d8f4;padding-left:3px}
.lite{background:#e3eef9}
.b2pt{margin-left:2px;width:50px;gap:2px}
.bsel{width:51px;margin-left:0;padding-left:5px;gap:6px}
.cur{width:12px;height:14px}
.bp{width:51px;gap:3px;padding-left:2px}
.blank{flex:1;background:#fff;margin:2px 1px 2px 3px;height:23px}
.bt4 .more{margin-right:4px}
.cad{display:block;width:1107px;height:507px;margin-left:5px;flex:none}
.cad-t text{font:14px "Liberation Sans",sans-serif;fill:#c8c8c8}
.cad-t .ct{text-anchor:middle;font-size:14px}
.ax{font:14px "Liberation Sans",sans-serif}

.brow{flex:1;display:flex;padding:2px 0 1px 217px}
.bb{width:675px;height:29px}
.bb .g9{margin-left:9px}
.lab{color:#7a7a7a;font-size:13px;margin-left:2px;flex:none}
.lab.ly{margin-left:3px}
.spin{height:23px;border:1px solid #767676;background:#f0f0f0;margin-left:3px;display:flex;align-items:center;flex:none;color:#c17a2c;font-size:13px}
.sp1{width:58px}
.sp2{width:68px;margin-left:4px}
.sv{flex:1;text-align:right;padding-right:5px}
.sa{width:14px;display:flex;flex-direction:column;align-items:center;gap:5px}
.up,.dn{width:5px;height:5px;border:solid #666;border-width:1px 0 0 1px;transform:rotate(45deg);display:block}
.dn{transform:rotate(225deg)}
.chk{width:11px;height:11px;border:1px solid #999;margin-left:3px;flex:none}
.rot{margin-left:9px;flex:none}
.sep.s2{height:24px;margin-left:3px;margin-right:-1px}
.sep.s2.s2b{margin-left:1px}

.status{height:20px;display:flex;background:#f0f0f0;flex:none;gap:3px;padding-left:1px}
.sc{border:1px solid #dcdcdc;background:#fbfbfb;height:20px;display:flex;align-items:center;padding-left:1px;flex:none;white-space:nowrap;color:#111}
.s-a{width:146px}.s-b{width:77px;padding-left:2px}.s-c{width:97px;padding-left:2px}.s-d{width:47px}.s-e{width:913px;padding-left:2px}.s-f{flex:1;width:auto}

.task{height:40px;background:#04121c;display:flex;align-items:center;color:#e4e4e4;flex:none;position:relative}
.tk-start{width:48px;height:40px;background:#000;display:flex;align-items:center;justify-content:center;flex:none}
.win{width:16px;height:16px}
.search{width:344px;height:40px;background:#333;display:flex;align-items:center;flex:none;padding-left:9px}
.cort{width:20px;height:20px;border:3px solid #d8d8d8;border-radius:50%;flex:none}
.search-t{margin-left:7px;color:#8a96a5;font-size:14px;letter-spacing:-.100px}
.mic{width:16px;height:16px;margin-left:auto;margin-right:12px}
.tk{height:40px;display:flex;align-items:center;justify-content:center;flex:none;position:relative}
.w36{width:36px}.w42{width:42px}.w46{width:46px}.w48{width:48px}.w52{width:52px}.w56{width:56px}
.tv{width:22px;height:16px}
.ta{width:24px;height:24px}
.on{background:linear-gradient(#76b9ed,#76b9ed) center bottom/34px 2px no-repeat}
.cur-app{background:#2f3b41 linear-gradient(#76b9ed,#76b9ed) center bottom/42px 2px no-repeat}
.q{position:absolute;right:6px;top:5px;color:#ffe600;font:700 17px/18px "Liberation Sans",sans-serif}
.tray-l{margin-left:13px;width:30px;flex:none;color:#ddd}
.cpu{display:flex;flex-direction:column;align-items:center;margin-left:12px;width:56px;flex:none;font-size:12px;line-height:18px}
.tray{display:flex;align-items:center;margin-left:15px;flex:none;width:188px}
.up-ico{width:12px;height:8px;flex:none}
.batt{width:18px;height:12px;margin-left:10px;flex:none}
.sm{width:16px;height:16px;flex:none}
.wf{margin-left:9px}
.sk{margin-left:5px}
.kb{width:22px;height:12px;margin-left:8px;flex:none}
.ime{font-size:13px;margin-left:11px;color:#fff}
.sog-s{width:16px;height:16px;margin-left:14px;background:#f0501e;color:#fff;font:700 13px/16px "Liberation Sans",sans-serif;text-align:center;border-radius:2px;transform:rotate(-8deg)}
.clock{display:flex;flex-direction:column;align-items:center;width:56px;flex:none;font-size:12px;line-height:18px;height:40px;justify-content:center;background:linear-gradient(90deg,transparent 49px,#000 49px)}
.notif{flex:1;height:40px;background:#000;display:flex;align-items:center;padding:0 0 4px 21px;position:relative;box-shadow:inset -4px 0 0 #000,inset -5px 0 0 #555}
.badge{position:absolute;left:28px;top:20px;width:16px;height:16px;border-radius:50%;background:#3a3f44;color:#fff;font:700 11px/16px "Liberation Sans",sans-serif;text-align:center}

.ball{position:absolute;left:1013px;top:-30px;width:47px;height:49px;border-radius:50%;background:#4ccb60;border:2px solid #a9b4ab;box-shadow:0 1px 2px rgba(0,0,0,.3);color:#fff;font:700 11px/12px "Liberation Sans",sans-serif;display:flex;align-items:flex-end;justify-content:center;padding-bottom:5px}
.sogou{position:absolute;left:700px;top:14px;width:196px;height:23px;background:rgba(255,255,255,.96);border:1px solid #b7c6d6;display:flex;align-items:center;padding-left:22px}
.sg-s{position:absolute;left:-10px;top:-1px;width:25px;height:25px;background:#f0501e;color:#fff;font:700 20px/25px "Liberation Sans",sans-serif;text-align:center;border-radius:3px;transform:rotate(-10deg)}
.sg-en{color:#2d82d8;font-weight:700;font-size:14px;width:23px;flex:none}
.sg-p{color:#2d82d8;font-weight:700;width:21px;margin-top:-5px;flex:none}
.sg-i{width:16px;height:16px;margin-right:6px;flex:none}
```
